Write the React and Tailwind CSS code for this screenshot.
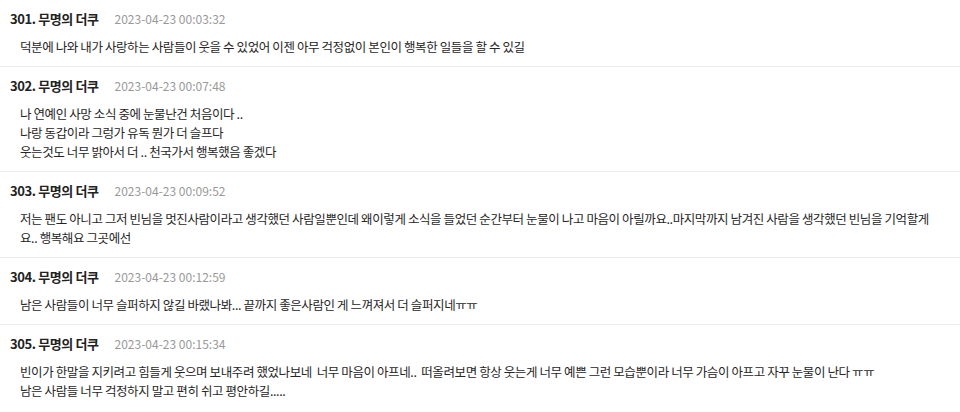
import React from "react";

const comments = [
  {
    no: 301,
    date: "2023-04-23 00:03:32",
    lines: ["덕분에 나와 내가 사랑하는 사람들이 웃을 수 있었어 이젠 아무 걱정없이 본인이 행복한 일들을 할 수 있길"],
  },
  {
    no: 302,
    date: "2023-04-23 00:07:48",
    lines: [
      "나 연예인 사망 소식 중에 눈물난건 처음이다 ..",
      "나랑 동갑이라 그렁가 유독 뭔가 더 슬프다",
      "웃는것도 너무 밝아서 더 .. 천국가서 행복했음 좋겠다",
    ],
  },
  {
    no: 303,
    date: "2023-04-23 00:09:52",
    lines: [
      "저는 팬도 아니고 그저 빈님을 멋진사람이라고 생각했던 사람일뿐인데 왜이렇게 소식을 들었던 순간부터 눈물이 나고 마음이 아릴까요..마지막까지 남겨진 사람을 생각했던 빈님을 기억할게",
      "요.. 행복해요 그곳에선",
    ],
  },
  {
    no: 304,
    date: "2023-04-23 00:12:59",
    lines: ["남은 사람들이 너무 슬퍼하지 않길 바랬나봐... 끝까지 좋은사람인 게 느껴져서 더 슬퍼지네ㅠㅠ"],
  },
  {
    no: 305,
    date: "2023-04-23 00:15:34",
    lines: [
      "빈이가 한말을 지키려고 힘들게 웃으며 보내주려 했었나보네  너무 마음이 아프네..  떠올려보면 항상 웃는게 너무 예쁜 그런 모습뿐이라 너무 가슴이 아프고 자꾸 눈물이 난다 ㅠㅠ",
      "남은 사람들 너무 걱정하지 말고 편히 쉬고 평안하길.....",
    ],
  },
];

function Comment({ c, last }) {
  return (
    <div className={last ? "pt-[10px] pb-[10px]" : "pt-[10px] pb-[10px] border-b border-[#ebebeb]"}>
      <div className="flex items-baseline h-[18px] leading-[18px] pl-[10px]">
        <span className="text-[13px] font-bold text-[#222] tracking-[-0.4px]">
          {c.no}. 무명의 더쿠
        </span>
        <span className="ml-[16px] text-[12px] text-[#999]">{c.date}</span>
      </div>
      <div className="mt-[9px] pl-[20px] pr-[10px] text-[12.5px] leading-[19px] text-[#262626] tracking-[-0.4px]">
        {c.lines.map((l, i) => (
          <div key={i} className="whitespace-pre">
            {l}
          </div>
        ))}
      </div>
    </div>
  );
}

export default function App() {
  return (
    <div
      className="w-[960px] h-[412px] overflow-hidden bg-white"
      style={{ fontFamily: '"Noto Sans CJK KR", "Noto Sans", sans-serif' }}
    >
      {comments.map((c, i) => (
        <Comment key={c.no} c={c} last={i === comments.length - 1} />
      ))}
    </div>
  );
}
